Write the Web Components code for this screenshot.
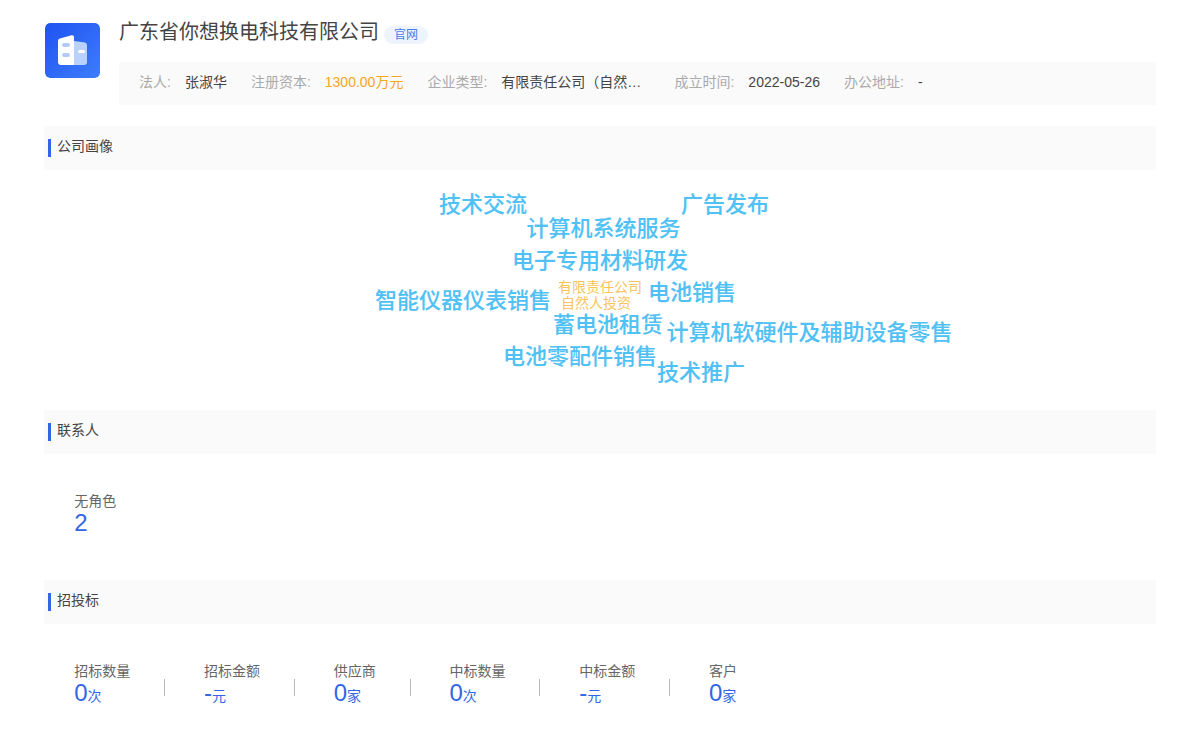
<!DOCTYPE html>
<html lang="zh">
<head>
<meta charset="utf-8">
<title>公司详情</title>
<style>
    html, body {
        background: #fff;
        margin: 0;
    }
    body {
        font-family: "Liberation Sans", "Noto Sans CJK SC", sans-serif;
        height: 752px;
        overflow: hidden;
    }
</style>
</head>
<body>
<company-page>
    <company-head slot="head" data-name="广东省你想换电科技有限公司" data-link="官网">
        <info-item data-label="法人">张淑华</info-item>
        <info-item data-label="注册资本" data-tone="money">1300.00万元</info-item>
        <info-item data-label="企业类型" data-width="149.2">有限责任公司（自然人投资</info-item>
        <info-item data-label="成立时间">2022-05-26</info-item>
        <info-item data-label="办公地址">-</info-item>
    </company-head>

    <section-bar data-title="公司画像"></section-bar>
    <word-cloud>
        <cloud-word data-x="439" data-y="191">技术交流</cloud-word>
        <cloud-word data-x="681" data-y="191">广告发布</cloud-word>
        <cloud-word data-x="526.500" data-y="215">计算机系统服务</cloud-word>
        <cloud-word data-x="512" data-y="247">电子专用材料研发</cloud-word>
        <cloud-word data-x="375" data-y="287">智能仪器仪表销售</cloud-word>
        <cloud-word data-x="558" data-y="278" data-size="small">有限责任公司</cloud-word>
        <cloud-word data-x="561" data-y="294" data-size="small">自然人投资</cloud-word>
        <cloud-word data-x="648" data-y="279">电池销售</cloud-word>
        <cloud-word data-x="553" data-y="311">蓄电池租赁</cloud-word>
        <cloud-word data-x="666.500" data-y="319">计算机软硬件及辅助设备零售</cloud-word>
        <cloud-word data-x="503" data-y="343">电池零配件销售</cloud-word>
        <cloud-word data-x="657" data-y="359">技术推广</cloud-word>
    </word-cloud>

    <section-bar data-title="联系人"></section-bar>
    <stat-row>
        <stat-item data-label="无角色" data-value="2"></stat-item>
    </stat-row>

    <section-bar data-title="招投标"></section-bar>
    <stat-row>
        <stat-item data-label="招标数量" data-value="0" data-unit="次" data-split></stat-item>
        <stat-item data-label="招标金额" data-value="-" data-unit="元" data-split></stat-item>
        <stat-item data-label="供应商" data-value="0" data-unit="家" data-split></stat-item>
        <stat-item data-label="中标数量" data-value="0" data-unit="次" data-split></stat-item>
        <stat-item data-label="中标金额" data-value="-" data-unit="元" data-split></stat-item>
        <stat-item data-label="客户" data-value="0" data-unit="家"></stat-item>
    </stat-row>
</company-page>

<script>
(function () {
    const template = document.createElement("template");
    template.innerHTML = `
    <style>
    :host {
        box-sizing: border-box;
        display: block;
        padding: 0 44px;
        width: 1200px;
    }
    .head {
        display: block;
        margin-bottom: 21px;
    }
    </style>
    <div class="head"><slot name="head"></slot></div>
    <slot></slot>
    `;
    class CompanyPage extends HTMLElement {
        constructor() {
            super();
            this.attachShadow({ mode: "open" });
            this.shadowRoot.appendChild(template.content.cloneNode(true));
        }
    }
    customElements.define("company-page", CompanyPage);
})();
(function () {
    const template = document.createElement("template");
    template.innerHTML = `
    <style>
    :host {
        display: flex;
        gap: 19px;
        padding-top: 18px;
    }
    .logo {
        border-radius: 5px;
        flex: none;
        height: 55px;
        margin: 5px 0 0 1px;
        width: 55px;
    }
    .main {
        flex-grow: 1;
        min-width: 0;
    }
    .title {
        align-items: center;
        display: flex;
        height: 28px;
    }
    .name {
        color: #444;
        font-size: 20px;
        line-height: 28px;
    }
    .link {
        background: #eef3fd;
        border-radius: 9px;
        color: #4a7cea;
        font-size: 12px;
        height: 18px;
        line-height: 18px;
        margin: 5px 0 0 5px;
        padding: 0 10px;
    }
    .info {
        align-items: center;
        background: #fafafa;
        box-sizing: border-box;
        display: flex;
        gap: 24px;
        height: 43px;
        margin-top: 16px;
        padding: 0 20px 3px;
    }
    </style>
    <svg class="logo" viewBox="0 0 55 55">
        <defs>
            <linearGradient id="logo-bg" x1="0" y1="0" x2="1" y2="1">
                <stop offset="0" stop-color="#1f53f2"/>
                <stop offset="1" stop-color="#3d7dfb"/>
            </linearGradient>
        </defs>
        <rect width="55" height="55" rx="5" fill="url(#logo-bg)"/>
        <path d="M29 18 L40 19.500 Q42 20 42 22 V39 Q42 42 39 42 H29 Z" fill="#b9d1fb"/>
        <path d="M13 18 Q13 16 15 15.600 L26.500 12.300 Q29 12 29 14 V42 H16 Q13 42 13 39 Z" fill="#fff"/>
        <rect x="17" y="20" width="8" height="4" rx="2" fill="#b5cafa"/>
        <rect x="17" y="30" width="8" height="4" rx="2" fill="#b5cafa"/>
        <rect x="33" y="27" width="7" height="3" rx="1.500" fill="#fff"/>
    </svg>
    <div class="main">
        <div class="title">
            <span class="name"></span>
            <span class="link"></span>
        </div>
        <div class="info"><slot></slot></div>
    </div>
    `;
    class CompanyHead extends HTMLElement {
        constructor() {
            super();
            this.attachShadow({ mode: "open" });
            this.shadowRoot.appendChild(template.content.cloneNode(true));
        }
        connectedCallback() {
            this.shadowRoot.querySelector(".name").textContent = this.getAttribute("data-name");
            this.shadowRoot.querySelector(".link").textContent = this.getAttribute("data-link");
        }
    }
    customElements.define("company-head", CompanyHead);
})();
(function () {
    const template = document.createElement("template");
    template.innerHTML = `
    <style>
    :host {
        align-items: center;
        display: flex;
        flex: none;
        font-size: 14px;
        line-height: 20px;
    }
    .label {
        color: #aaa;
        flex: none;
        margin-right: 14px;
    }
    .value {
        color: #444;
        overflow: hidden;
        text-overflow: ellipsis;
        white-space: nowrap;
    }
    :host([data-tone=money]) .value {
        color: #f5a623;
    }
    </style>
    <span class="label"></span>
    <span class="value"><slot></slot></span>
    `;
    class InfoItem extends HTMLElement {
        constructor() {
            super();
            this.attachShadow({ mode: "open" });
            this.shadowRoot.appendChild(template.content.cloneNode(true));
        }
        connectedCallback() {
            this.shadowRoot.querySelector(".label").textContent = this.getAttribute("data-label") + ":";
            const width = this.getAttribute("data-width");
            if (width)
                this.shadowRoot.querySelector(".value").style.width = width + "px";
        }
    }
    customElements.define("info-item", InfoItem);
})();
(function () {
    const template = document.createElement("template");
    template.innerHTML = `
    <style>
    :host {
        align-items: center;
        background: #fafafa;
        box-sizing: border-box;
        display: flex;
        height: 44px;
        padding: 0 0 1px 4px;
    }
    .mark {
        background: #3366e6;
        height: 18px;
        margin-right: 6px;
        width: 3px;
    }
    .title {
        color: #444;
        font-size: 14px;
        line-height: 20px;
        margin-top: -3px;
    }
    </style>
    <span class="mark"></span>
    <span class="title"></span>
    `;
    class SectionBar extends HTMLElement {
        constructor() {
            super();
            this.attachShadow({ mode: "open" });
            this.shadowRoot.appendChild(template.content.cloneNode(true));
        }
        connectedCallback() {
            this.shadowRoot.querySelector(".title").textContent = this.getAttribute("data-title");
        }
    }
    customElements.define("section-bar", SectionBar);
})();
(function () {
    const template = document.createElement("template");
    template.innerHTML = `
    <style>
    :host {
        display: block;
        height: 240px;
        position: relative;
    }
    </style>
    <slot></slot>
    `;
    class WordCloud extends HTMLElement {
        constructor() {
            super();
            this.attachShadow({ mode: "open" });
            this.shadowRoot.appendChild(template.content.cloneNode(true));
        }
    }
    customElements.define("word-cloud", WordCloud);
})();
(function () {
    const template = document.createElement("template");
    template.innerHTML = `
    <style>
    :host {
        -webkit-text-stroke: 0.1px #4fc1f5;
        color: #4fc1f5;
        font-size: 22px;
        font-weight: 500;
        line-height: 28px;
        position: absolute;
        white-space: nowrap;
    }
    :host([data-size=small]) {
        -webkit-text-stroke: 0;
        color: #f9c45c;
        font-size: 14px;
        font-weight: 400;
        line-height: 18px;
    }
    </style>
    <slot></slot>
    `;
    /* the cloud is a free canvas: data-x/data-y are page coordinates of the word */
    const CLOUD_LEFT = 44;
    const CLOUD_TOP = 170;
    class CloudWord extends HTMLElement {
        constructor() {
            super();
            this.attachShadow({ mode: "open" });
            this.shadowRoot.appendChild(template.content.cloneNode(true));
        }
        connectedCallback() {
            this.style.left = (this.getAttribute("data-x") - CLOUD_LEFT) + "px";
            this.style.top = (this.getAttribute("data-y") - CLOUD_TOP) + "px";
        }
    }
    customElements.define("cloud-word", CloudWord);
})();
(function () {
    const template = document.createElement("template");
    template.innerHTML = `
    <style>
    :host {
        box-sizing: border-box;
        display: flex;
        height: 126px;
        padding: 37px 0 0 30.25px;
    }
    </style>
    <slot></slot>
    `;
    class StatRow extends HTMLElement {
        constructor() {
            super();
            this.attachShadow({ mode: "open" });
            this.shadowRoot.appendChild(template.content.cloneNode(true));
        }
    }
    customElements.define("stat-row", StatRow);
})();
(function () {
    const template = document.createElement("template");
    template.innerHTML = `
    <style>
    :host {
        align-self: flex-start;
        display: flex;
        flex: none;
    }
    .body {
        display: flex;
        flex-direction: column;
    }
    .label {
        color: #666;
        font-size: 14px;
        line-height: 20px;
    }
    .figure {
        color: #3366e6;
        font-size: 24px;
        height: 24px;
        line-height: 24px;
        white-space: nowrap;
    }
    .unit {
        font-size: 14px;
    }
    .split {
        background: #bbb;
        display: none;
        height: 17px;
        margin: 18px 39px 0 33.75px;
        width: 1px;
    }
    :host([data-split]) .split {
        display: block;
    }
    </style>
    <div class="body">
        <span class="label"></span>
        <span class="figure"><span class="value"></span><span class="unit"></span></span>
    </div>
    <span class="split"></span>
    `;
    class StatItem extends HTMLElement {
        constructor() {
            super();
            this.attachShadow({ mode: "open" });
            this.shadowRoot.appendChild(template.content.cloneNode(true));
        }
        connectedCallback() {
            this.shadowRoot.querySelector(".label").textContent = this.getAttribute("data-label");
            this.shadowRoot.querySelector(".value").textContent = this.getAttribute("data-value");
            this.shadowRoot.querySelector(".unit").textContent = this.getAttribute("data-unit") || "";
        }
    }
    customElements.define("stat-item", StatItem);
})();
</script>
</body>
</html>
